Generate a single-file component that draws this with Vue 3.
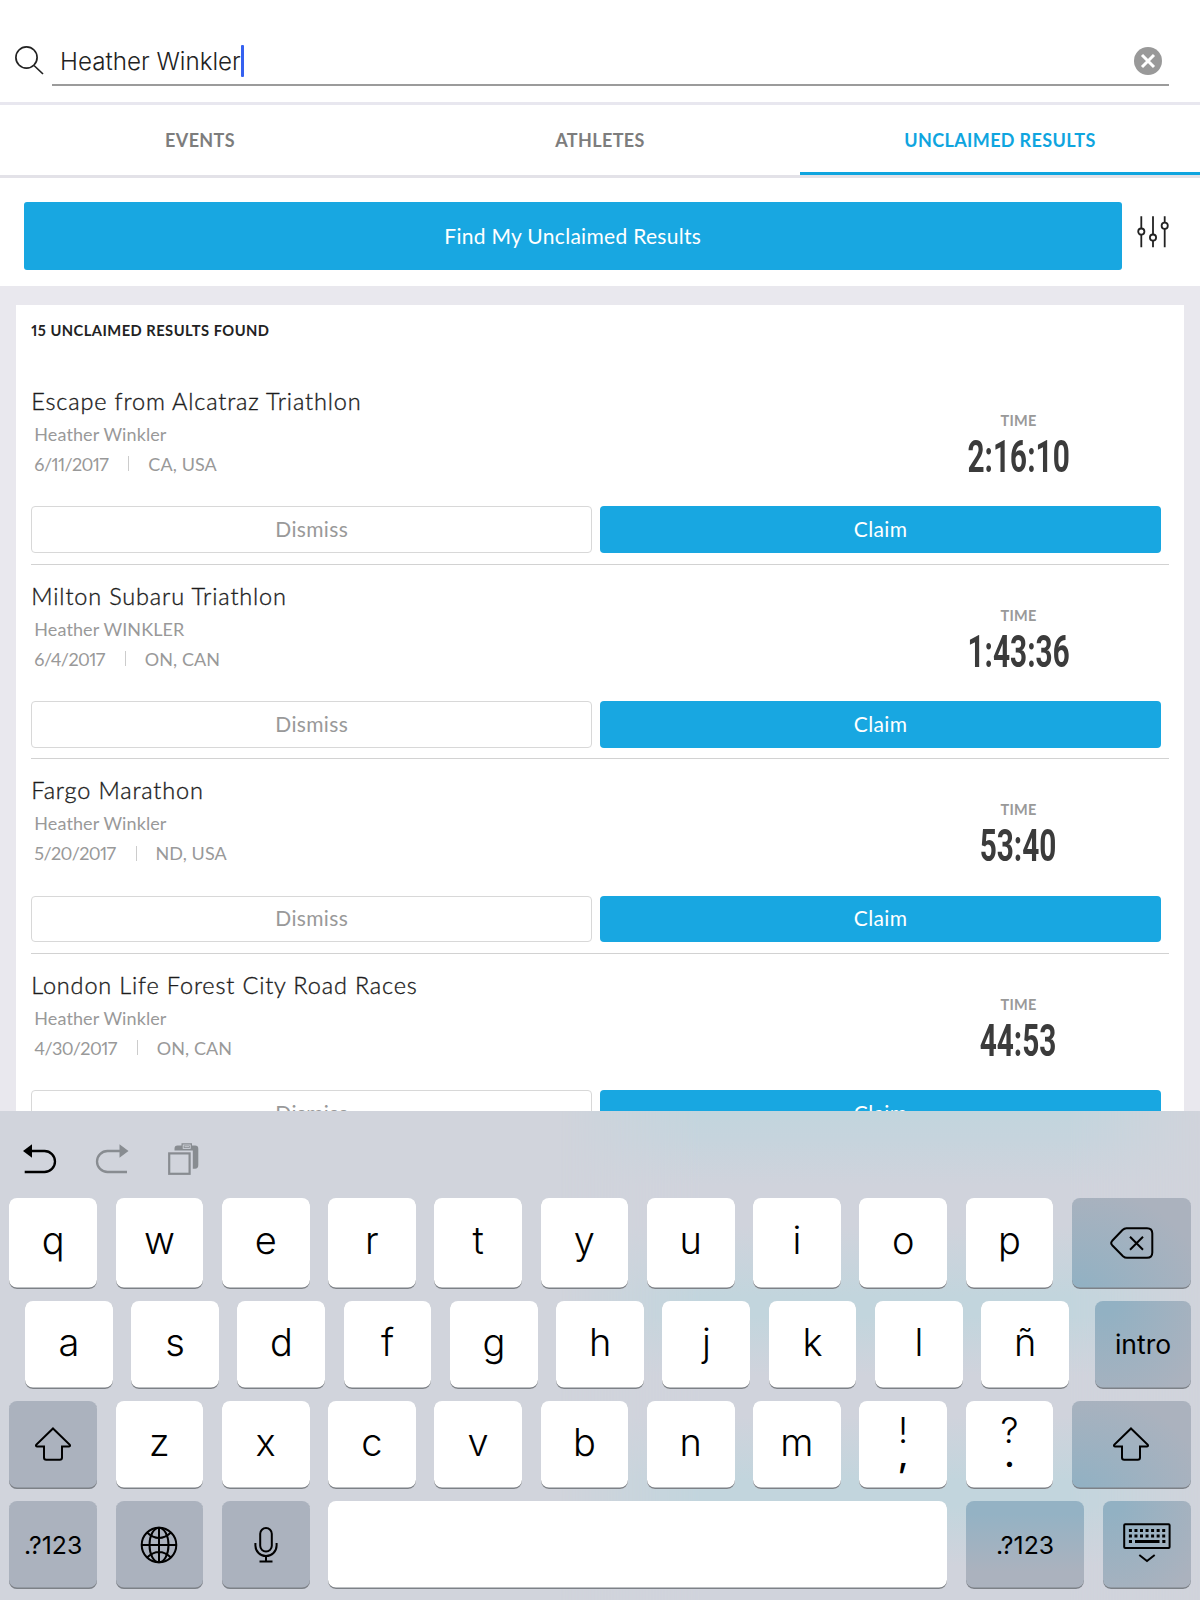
<template>
  <div class="screen">
    <header class="search">
      <svg class="search-icon" viewBox="0 0 30 30">
        <circle cx="11.5" cy="11.5" r="10.6" />
        <path d="M19 19.5 L28 28" />
      </svg>
      <div class="search-field">
        <span class="query">{{ query }}</span>
        <span class="caret"></span>
        <svg class="clear" viewBox="0 0 28 28">
          <circle cx="14" cy="14" r="14" />
          <path d="M8 8 L20 20 M20 8 L8 20" />
        </svg>
      </div>
    </header>

    <nav class="tabs">
      <div v-for="tab in tabs" :key="tab" class="tab" :class="{ active: tab === activeTab }">
        <span>{{ tab }}</span>
      </div>
    </nav>

    <div class="toolbar">
      <button class="find">Find My Unclaimed Results</button>
      <svg class="filter-icon" viewBox="0 0 32 32">
        <path d="M4.3 0.3 V12.5 M4.3 18.8 V31.3 M16 0.3 V18.5 M16 24.8 V31.3 M27.7 0.3 V6.6 M27.7 12.9 V31.3" />
        <circle cx="4.3" cy="15.6" r="3.1" />
        <circle cx="16" cy="21.6" r="3.1" />
        <circle cx="27.7" cy="9.8" r="3.1" />
      </svg>
    </div>

    <main class="content">
      <section class="card">
        <h2 class="count">15 UNCLAIMED RESULTS FOUND</h2>
        <article v-for="result in results" :key="result.event" class="result">
          <div class="info">
            <div class="details">
              <h3 class="event">{{ result.event }}</h3>
              <div class="athlete">{{ result.athlete }}</div>
              <div class="meta">
                <span class="date">{{ result.date }}</span>
                <i class="bar"></i>
                <span>{{ result.place }}</span>
              </div>
            </div>
            <div class="time">
              <div class="time-label">TIME</div>
              <div class="time-value">{{ result.time }}</div>
            </div>
          </div>
          <div class="actions">
            <button class="dismiss">Dismiss</button>
            <button class="claim">Claim</button>
          </div>
        </article>
      </section>
    </main>

    <div class="keyboard">
      <div class="tint"></div>
      <div class="shortcuts">
        <svg class="undo" viewBox="0 0 34 32">
          <path class="line" d="M8 8 H21.5 A10.5 10.5 0 0 1 21.5 29 H1.7" />
          <path class="head" d="M0 8 L9 1.2 V14.8 Z" />
        </svg>
        <svg class="redo" viewBox="0 0 34 32">
          <path class="line" d="M26 8 H12.5 A10.5 10.5 0 0 0 12.5 29 H32" />
          <path class="head" d="M33.5 8 L24.5 1.2 V14.8 Z" />
        </svg>
        <svg class="paste" viewBox="0 0 31 32">
          <path class="head" d="M6.5 7.5 V5.8 Q6.5 2.5 9.5 2.5 H13.5 V0.3 H24 V2.5 H27 Q30.3 2.5 30.3 5.8 V22 Q30.3 25.8 27 25.8 H24.8 V7.5 Z" />
          <rect class="slot" x="15.2" y="2" width="7" height="3.4" />
          <path class="slot-mark" d="M16.5 3.7 H21" />
          <rect class="sheet" x="1.2" y="10.4" width="20.4" height="20.4" />
        </svg>
      </div>

      <div v-for="(row, i) in rows" :key="i" class="row" :class="'row-' + (i + 1)">
        <div v-for="(key, k) in row" :key="k" class="key" :class="key.type">
          <svg v-if="key.icon === 'backspace'" class="i-backspace" viewBox="0 0 44 32">
            <path d="M16.5 1.2 H37 Q42.3 1.2 42.3 6.5 V25.5 Q42.3 30.8 37 30.8 H17 Q14.8 30.8 13 29.2 L2.2 18.2 Q0.2 16 2.2 13.8 L12.5 3 Q14.3 1.2 16.5 1.2 Z" />
            <path d="M20 9.7 L33 22.7 M33 9.7 L20 22.7" />
          </svg>
          <svg v-else-if="key.icon === 'shift'" class="i-shift" viewBox="0 0 36 34">
            <path d="M18 1.5 L34.8 17.8 Q35.5 19.5 33.8 19.5 H27 V30.5 Q27 32.7 24.8 32.7 H11.2 Q9 32.7 9 30.5 V19.5 H2.2 Q0.5 19.5 1.2 17.8 Z" />
          </svg>
          <svg v-else-if="key.icon === 'globe'" class="i-globe" viewBox="0 0 38 38">
            <circle cx="19" cy="19" r="17.3" />
            <ellipse cx="19" cy="19" rx="9.5" ry="17.3" />
            <path d="M19 1.7 V36.3 M1.7 19 H36.3 M7 6.5 Q19 17.5 31 6.5 M7 31.5 Q19 20.5 31 31.5" />
          </svg>
          <svg v-else-if="key.icon === 'mic'" class="i-mic" viewBox="0 0 24 36">
            <rect x="6.2" y="1" width="11.6" height="23.6" rx="5.8" />
            <path d="M1.4 16 V18.5 A10.6 10.6 0 0 0 22.6 18.5 V16 M12 29.2 V34.6 M5.5 34.6 H18.5" />
          </svg>
          <svg v-else-if="key.icon === 'hide'" class="i-hide" viewBox="0 0 48 40">
            <rect x="1.2" y="1.2" width="45.4" height="23.8" rx="1" />
            <path class="dots" d="M5.9 7.5 H43 M5.9 13 H43" />
            <path class="solid" d="M5.9 18.5 H9 M12 18.5 H36.5 M39.3 18.5 H42.4" />
            <path d="M16.3 32 L24 38 L31.7 32" />
          </svg>
          <template v-else-if="key.alt">
            <span>{{ key.alt }}</span>
            <span class="mark">{{ key.label }}</span>
          </template>
          <span v-else>{{ key.label }}</span>
        </div>
      </div>
    </div>
  </div>
</template>

<script setup>
import { ref } from 'vue'

const query = ref('Heather Winkler')
const tabs = ['EVENTS', 'ATHLETES', 'UNCLAIMED RESULTS']
const activeTab = ref('UNCLAIMED RESULTS')

const results = ref([
  { event: 'Escape from Alcatraz Triathlon', athlete: 'Heather Winkler', date: '6/11/2017', place: 'CA, USA', time: '2:16:10' },
  { event: 'Milton Subaru Triathlon', athlete: 'Heather WINKLER', date: '6/4/2017', place: 'ON, CAN', time: '1:43:36' },
  { event: 'Fargo Marathon', athlete: 'Heather Winkler', date: '5/20/2017', place: 'ND, USA', time: '53:40' },
  { event: 'London Life Forest City Road Races', athlete: 'Heather Winkler', date: '4/30/2017', place: 'ON, CAN', time: '44:53' }
])

const letters = (text) => [...text].map(label => ({ label, type: 'letter' }))

const rows = [
  [...letters('qwertyuiop'), { icon: 'backspace', type: 'dark wide glow-bottom' }],
  [...letters('asdfghjklñ'), { label: 'intro', type: 'dark enter glow-top' }],
  [
    { icon: 'shift', type: 'dark' },
    ...letters('zxcvbnm'),
    { label: ',', alt: '!', type: 'double' },
    { label: '.', alt: '?', type: 'double' },
    { icon: 'shift', type: 'dark wide glow-bottom' }
  ],
  [
    { label: '.?123', type: 'dark' },
    { icon: 'globe', type: 'dark' },
    { icon: 'mic', type: 'dark' },
    { label: '', type: 'space' },
    { label: '.?123', type: 'dark symbols glow-full' },
    { icon: 'hide', type: 'dark glow-top' }
  ]
]
</script>

<style>
html,
body {
  margin: 0;
  overflow: hidden;
}
</style>

<style scoped>
.screen {
  width: 1200px;
  height: 1600px;
  display: flex;
  flex-direction: column;
  overflow: hidden;
  background: #e9e8ee;
  font-family: Lato, "Liberation Sans", sans-serif;
  font-variant-numeric: proportional-nums;
}

.screen * {
  box-sizing: border-box;
}

svg {
  display: block;
  flex: none;
  fill: none;
  stroke: #000;
}

button {
  font-family: inherit;
  padding: 0;
  border: 0;
}

/* search */
.search {
  flex: none;
  height: 102px;
  padding: 40px 31px 0 15px;
  background: #fff;
  display: flex;
}

.search-icon {
  width: 30px;
  height: 30px;
  margin: 6px 7px 0 0;
  stroke: #222;
  stroke-width: 1.7;
}

.search-field {
  flex: 1;
  height: 46px;
  padding: 0 7px 5px 8px;
  border-bottom: 2px solid #9b9b9b;
  display: flex;
  align-items: center;
  font-family: Inter, Roboto, sans-serif;
}

.query {
  padding-top: 3px;
  font-size: 24.2px;
  font-weight: 300;
  color: #222;
}

.caret {
  width: 3px;
  height: 32px;
  margin-top: 3px;
  border-radius: 1px;
  background: #3561f0;
}

.clear {
  width: 28px;
  height: 28px;
  margin: 2px 0 0 auto;
}

.clear circle {
  fill: #999;
  stroke: none;
}

.clear path {
  stroke: #fff;
  stroke-width: 3;
}

/* tabs */
.tabs {
  flex: none;
  height: 76px;
  display: flex;
  background: #fff;
  border-top: 3px solid #e8e7ef;
  border-bottom: 3px solid #e3e2e8;
}

.tab {
  flex: 1;
  display: flex;
  align-items: center;
  justify-content: center;
  padding-top: 3px;
  border-bottom: 3px solid transparent;
  font-size: 18px;
  font-weight: 700;
  letter-spacing: 0.35px;
  color: #7d7d7d;
}

.tab.active {
  color: #0fa5df;
  border-color: #0fa5df;
}

/* find button */
.toolbar {
  flex: none;
  height: 108px;
  padding: 24px 31px 0 23.5px;
  background: #fff;
  display: flex;
  justify-content: space-between;
}

.find {
  width: 1098.5px;
  height: 68px;
  padding-bottom: 2px;
  border-radius: 3px;
  background: #18a7e1;
  color: #fff;
  font-size: 21px;
  letter-spacing: 0.3px;
}

.filter-icon {
  width: 32px;
  height: 32px;
  margin-top: 14px;
  stroke: #222;
  stroke-width: 1.8;
}

/* results */
.content {
  flex: none;
  height: 825px;
  padding: 18.6px 16px 0;
  overflow: hidden;
}

.card {
  background: #fff;
  padding: 0 15px 0 15.3px;
}

.count {
  height: 65.4px;
  margin: 0;
  padding-top: 16px;
  font-size: 14.7px;
  line-height: 18px;
  font-weight: 700;
  letter-spacing: 0.47px;
  color: #222;
}

.result {
  height: 194.6px;
  border-bottom: 1.5px solid #d2d2d2;
}

.info {
  height: 136.5px;
  display: flex;
  justify-content: space-between;
}

.event {
  margin: 0;
  padding-top: 16px;
  font-size: 23.5px;
  line-height: 30px;
  font-weight: 300;
  letter-spacing: 0.84px;
  color: #1c1c1c;
  -webkit-text-stroke: 0.35px #1c1c1c;
}

.athlete,
.meta {
  padding-left: 3px;
  font-size: 18px;
  line-height: 22px;
  letter-spacing: 0.1px;
  color: #999;
}

.athlete {
  margin-top: 7px;
}

.meta {
  margin-top: 8px;
  display: flex;
  align-items: center;
}

.date {
  letter-spacing: -0.6px;
}

.bar {
  width: 1px;
  height: 15px;
  margin: 0 19px 0 20px;
  background: #ccc;
}

.time {
  width: 200px;
  margin-right: 50.5px;
  padding-top: 42px;
  display: flex;
  flex-direction: column;
  align-items: center;
}

.time-label {
  font-size: 14.5px;
  line-height: 18px;
  font-weight: 700;
  letter-spacing: 0.2px;
  color: #999;
}

.time-value {
  margin-top: 3px;
  font-family: Roboto, sans-serif;
  font-size: 43.5px;
  line-height: 50px;
  font-weight: 700;
  font-variant-numeric: tabular-nums;
  color: #3b3b3b;
  transform: scaleX(0.685);
}

.actions {
  display: flex;
  gap: 8px;
  padding-right: 8px;
}

.dismiss,
.claim {
  width: 50%;
  height: 46.5px;
  padding-bottom: 2px;
  border-radius: 4px;
  font-size: 21px;
  letter-spacing: 0.35px;
}

.dismiss {
  background: #fff;
  border: 1.5px solid #d8d8d8;
  color: #999;
}

.claim {
  background: #18a7e1;
  color: #fff;
}

/* keyboard */
.keyboard {
  position: relative;
  flex: 1;
  padding: 0 9.3px;
  background: #d1d4dc;
  font-family: Inter, Roboto, sans-serif;
}

.tint {
  position: absolute;
  inset: 0;
  background: linear-gradient(
    to bottom,
    #c2d5dd 0,
    #c6d4dd 28px,
    #d0d3dc 75px,
    #d0d3dc 115px,
    #c2d5dd 185px,
    #c2d5dd 205px,
    #d0d3dc 265px,
    #d0d3dc 305px,
    #c2d5dd 370px,
    #c2d5dd 395px,
    #d0d3dc 455px
  );
  mask-image: linear-gradient(to right, transparent 560px, #000 700px, #000 1070px, transparent 1200px);
}

.shortcuts {
  position: relative;
  height: 87.3px;
  padding: 32px 0 0 14.2px;
  display: flex;
}

.undo,
.redo {
  width: 34px;
  height: 32px;
}

.redo {
  margin-left: 37.5px;
}

.paste {
  width: 31px;
  height: 32px;
  margin-left: 39.5px;
}

.line {
  stroke-width: 2.3;
}

.head {
  fill: #000;
  stroke: none;
}

.redo .line {
  stroke: #888c91;
}

.redo .head,
.paste .head {
  fill: #888c91;
}

.slot,
.slot-mark {
  stroke: #d1d4dc;
  stroke-width: 0.9;
}

.sheet {
  fill: #d1d4dc;
  stroke: #888c91;
  stroke-width: 2.2;
}

.row {
  position: relative;
  display: flex;
  gap: 18.5px;
  height: 87.3px;
  margin-bottom: 12.7px;
}

.row-1 {
  height: 90.3px;
}

.row-2 {
  padding-left: 15.7px;
}

.key {
  flex: none;
  width: 87.75px;
  border-radius: 8px;
  background: #fff;
  box-shadow: inset 0 -1.5px 0 #7d8187;
  display: flex;
  align-items: center;
  justify-content: center;
  color: #000;
  font-weight: 300;
}

.letter {
  padding-bottom: 6px;
  font-size: 38px;
}

.dark {
  padding-bottom: 1px;
  background-color: #abb2be;
  font-size: 24.8px;
  font-weight: 400;
}

.row-4 .dark {
  padding: 1px 0 0;
}

.wide,
.symbols {
  width: 118.9px;
}

.enter {
  width: 95.5px;
  margin-left: 7.8px;
  font-size: 26.5px;
}

.space {
  width: 619px;
}

.glow-bottom {
  background-image: radial-gradient(ellipse at 0 110%, #92b1c3 10%, transparent 80%);
}

.glow-top {
  background-image: radial-gradient(ellipse at 10% 0, #92b1c3 10%, transparent 90%);
}

.glow-full {
  background-image: linear-gradient(to bottom, #94b2c4 15%, transparent 80%);
}

.double {
  flex-direction: column;
  padding-bottom: 5px;
  font-size: 36px;
}

.double span {
  line-height: 26px;
}

.double .mark {
  margin-top: -2px;
  font-weight: 500;
}

.dark svg {
  stroke-width: 2;
}

.i-backspace {
  width: 44px;
  height: 32px;
  margin-left: 2px;
}

.i-shift {
  width: 36px;
  height: 34px;
}

.i-globe {
  width: 38px;
  height: 38px;
}

.i-mic {
  width: 24px;
  height: 36px;
}

.i-hide {
  width: 48px;
  height: 40px;
  margin-top: -5px;
}

.i-hide .dots {
  stroke-width: 3;
  stroke-dasharray: 3 2.55;
}

.i-hide .solid {
  stroke-width: 3;
}
</style>
